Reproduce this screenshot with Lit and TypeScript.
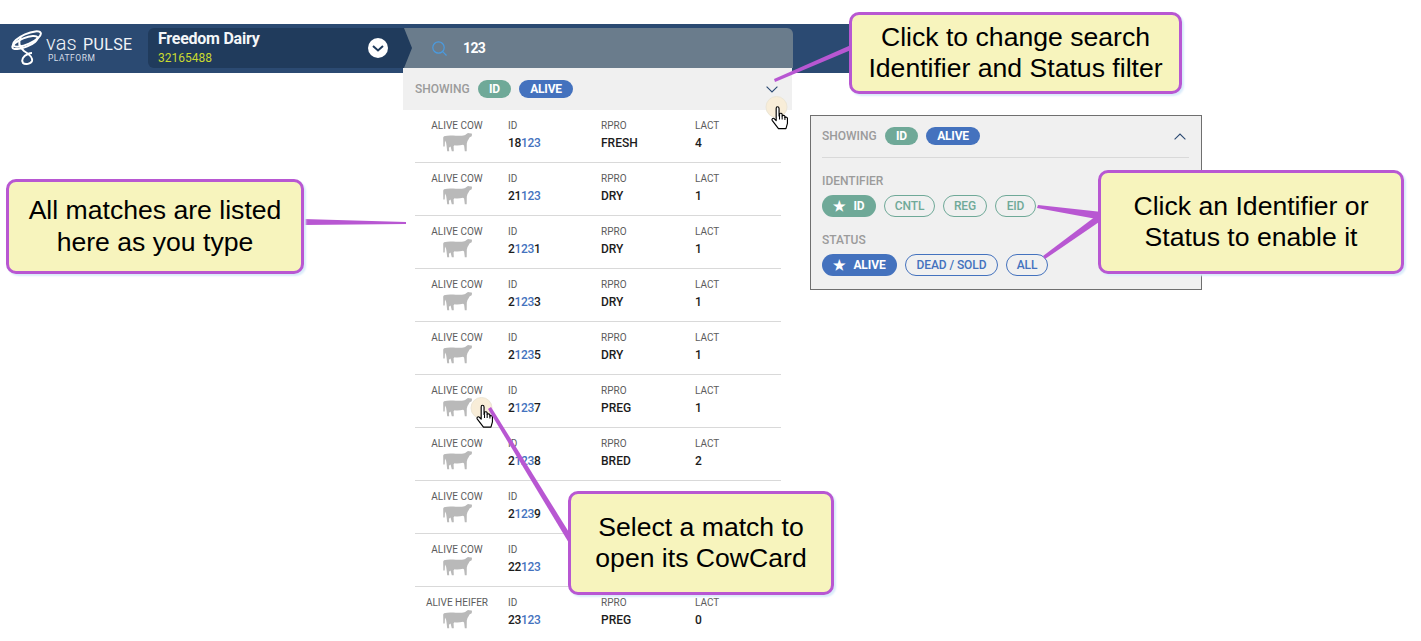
import { LitElement, html, css, svg } from "lit";
import { customElement } from "lit/decorators.js";

const rows = [
  ["ALIVE COW", "18", "123", "", "FRESH", "4"],
  ["ALIVE COW", "21", "123", "", "DRY", "1"],
  ["ALIVE COW", "2", "123", "1", "DRY", "1"],
  ["ALIVE COW", "2", "123", "3", "DRY", "1"],
  ["ALIVE COW", "2", "123", "5", "DRY", "1"],
  ["ALIVE COW", "2", "123", "7", "PREG", "1"],
  ["ALIVE COW", "2", "123", "8", "BRED", "2"],
  ["ALIVE COW", "2", "123", "9", "DRY", "1"],
  ["ALIVE COW", "22", "123", "", "DRY", "1"],
  ["ALIVE HEIFER", "23", "123", "", "PREG", "0"],
];

const cow = html`<svg class="cow" viewBox="0 0 30 20" width="30" height="20"><path fill="#b9b9b9" d="M2 4.200C6 3.300 10 3.600 14 3.800c3 .1 6 .2 8.500-.5 1.500-.6 2.500-1.700 3.500-2.200l1.200.2 2.500.1.300 1.100-.3 1.700-1.900 1c-.8 1-1.300 2.600-2.300 3.700l-.7 2.500-.1 7.800h-1.900l-.7-5.800-1.100-.7c-2.500.8-6 1-8.500.6l-.9 1 .2 4.900H9.800l-1.200-4.600-1.700 1.200.3 3.400H5.200l-.6-5.100-.5-3.400L3 8.400l-.3 6H1.300l-.1-9z"/></svg>`;

const hand = svg`<path fill="#fff" stroke="#000" stroke-width="1" stroke-linejoin="round" d="M5.500 1.500c1 0 1.500.7 1.500 1.500v6.500l.4-.1V7.500c.9-.6 2-.4 2.300.5v1.500c.9-.8 2-.6 2.400.3v1c1-.5 2-.1 2.200.8v4.400l-1.300 4.500H6.500L1 13.300c-.6-1 .7-2.300 1.700-1.500l1.800 1.700V3c0-.8.300-1.500 1-1.500z"/><path stroke="#000" fill="none" stroke-width=".9" d="M7.400 9.500v3M9.700 9.500v3M12.100 10.500v2.500"/>`;

@customElement("app-root")
export class AppRoot extends LitElement {
  static styles = css`
    :host {
      display: block;
      position: relative;
      width: 1421px;
      height: 641px;
      overflow: hidden;
      background: #fff;
      font-family: Roboto, "Liberation Sans", sans-serif;
    }
    .header {
      margin-top: 24px;
      width: 860px;
      height: 49px;
      background: #2b4a72;
      display: flex;
      align-items: flex-start;
      padding-top: 4px;
      box-sizing: border-box;
      position: absolute;
      top: 0;
      left: 0;
    }
    .logo {
      width: 148px;
      height: 40px;
      flex: none;
      display: flex;
      align-items: center;
      padding-left: 10px;
      box-sizing: border-box;
      gap: 4px;
      color: #fff;
    }
    .logo-text {
      display: flex;
      flex-direction: column;
      line-height: 1;
      margin-top: 2px;
    }
    .brand {
      font-size: 16px;
      line-height: 17px;
      white-space: nowrap;
      font-weight: 400;
      letter-spacing: 0.4px;
      color: #f1f4f8;
    }
    .brand b {
      font-weight: 300;
      font-size: 20px;
      margin-right: 6px;
      letter-spacing: 0.2px;
    }
    .platform {
      font-size: 8.500px;
      line-height: 9px;
      letter-spacing: 0.5px;
      margin-top: 1px;
      margin-left: 2px;
      color: #d5dde8;
    }
    .farm {
      width: 264px;
      height: 40px;
      flex: none;
      background: #203b5c;
      border-radius: 6px 0 0 6px;
      display: flex;
      align-items: center;
      justify-content: space-between;
      box-sizing: border-box;
      padding: 0 24px 0 10px;
      clip-path: polygon(0 0, 256px 0, 264px 20px, 256px 40px, 0 40px);
      position: relative;
      z-index: 3;
    }
    .farm-name {
      color: #f4f6f8;
      font-weight: 700;
      font-size: 16px;
      line-height: 20px;
      letter-spacing: -0.25px;
    }
    .farm-id {
      color: #c9d92f;
      font-size: 12px;
      line-height: 17px;
      margin-top: 1px;
    }
    .circle {
      width: 20px;
      height: 20px;
      border-radius: 50%;
      background: #fff;
      display: flex;
      align-items: center;
      justify-content: center;
    }
    .search {
      width: 390px;
      height: 40px;
      margin-left: -9px;
      background: #6a7c8c;
      border-radius: 0 6px 0 0;
      display: flex;
      align-items: center;
      gap: 16px;
      padding-left: 29px;
      box-sizing: border-box;
      color: #fff;
      font-weight: 700;
      font-size: 14px;
      letter-spacing: -0.6px;
    }
    .main {
      position: absolute;
      left: 403px;
      top: 68px;
      display: flex;
      align-items: flex-start;
      gap: 18px;
    }
    .results {
      width: 389px;
      flex: none;
    }
    .showing {
      height: 42px;
      background: #f0f0f0;
      display: flex;
      align-items: center;
      padding: 0 14px 0 12px;
      box-sizing: border-box;
    }
    .lbl {
      color: #9b9b9b;
      font-size: 12px;
      font-weight: 500;
      width: 55px;
    }
    .chip {
      height: 18px;
      border-radius: 9px;
      color: #fff;
      font-size: 12px;
      font-weight: 700;
      letter-spacing: -0.2px;
      display: flex;
      align-items: center;
      justify-content: center;
      box-sizing: border-box;
      margin-left: 8px;
    }
    .green { background: #6fa998; }
    .blue { background: #4472be; }
    .c-id { width: 33px; }
    .c-alive { width: 54px; }
    .chev { margin-left: auto; display: block; }
    .list {
      width: 366px;
      margin-left: 12px;
    }
    .row {
      height: 53px;
      box-sizing: border-box;
      border-bottom: 1px solid #d9d9d9;
      display: grid;
      grid-template-columns: 84px 84px 85px 1fr;
      column-gap: 9px;
      padding-top: 9px;
    }
    .row:last-child { border-bottom: none; }
    .label {
      font-size: 10px;
      line-height: 13px;
      color: #5c5c5c;
      white-space: nowrap;
    }
    .val {
      font-size: 12px;
      line-height: 16px;
      margin-top: 3px;
      color: #1c1c1c;
      font-weight: 500;
    }
    .val.num { letter-spacing: -0.3px; }
    .val span { color: #4472be; }
    .kind {
      display: flex;
      flex-direction: column;
      align-items: center;
    }
    .cow { margin-top: 0; display: block; }
    .filters {
      flex: none;
      margin-top: 47px;
      width: 392px;
      height: 175px;
      box-sizing: border-box;
      background: #f0f0f0;
      border: 1px solid #6f6f6f;
      padding: 10px 12px 0 11px;
    }
    .filter-top {
      display: flex;
      align-items: center;
      height: 20px;
      padding-bottom: 11px;
      border-bottom: 1px solid #d9d9d9;
      box-sizing: content-box;
    }
    .filter-top .chev { margin-right: 3px; }
    .sec {
      color: #9b9b9b;
      font-size: 12px;
      font-weight: 500;
      line-height: 16px;
    }
    .sec.first { margin-top: 15px; }
    .sec.second { margin-top: 15px; }
    .opts {
      display: flex;
      gap: 8px;
      margin-top: 6px;
    }
    .opt {
      height: 22px;
      border-radius: 11px;
      font-size: 12px;
      font-weight: 500;
      letter-spacing: -0.1px;
      display: flex;
      align-items: center;
      justify-content: center;
      gap: 7px;
      box-sizing: border-box;
      border: 1px solid transparent;
      white-space: nowrap;
    }
    .opt.on { color: #fff; font-weight: 700; }
    .star { font-size: 14px; line-height: 14px; }
    .opt.g { border-color: #6fa998; color: #6fa998; }
    .opt.b { border-color: #4472be; color: #4472be; }
    .lines {
      position: absolute;
      left: 0;
      top: 0;
      z-index: 5;
      pointer-events: none;
    }
    .callout {
      position: absolute;
      z-index: 6;
      box-sizing: border-box;
      background: #f7f4bd;
      border: 3px solid #b857d2;
      border-radius: 10px;
      box-shadow: 2px 2px 2px #d9ebfa;
      display: flex;
      align-items: center;
      justify-content: center;
      text-align: center;
      color: #000;
      font-family: "Liberation Sans", Arial, sans-serif;
      font-size: 26.600px;
      line-height: 31.500px;
    }
    .c1 { left: 849px; top: 12px; width: 333px; height: 82px; }
    .c2 { left: 6px; top: 179px; width: 298px; height: 95px; }
    .c3 { left: 1098px; top: 170px; width: 306px; height: 104px; }
    .c4 { left: 568px; top: 491px; width: 266px; height: 104px; }
    .pointer {
      position: absolute;
      z-index: 4;
      pointer-events: none;
    }
    .p1 { left: 765px; top: 95px; }
    .p2 { left: 470px; top: 396px; }
  `;

  private chevron(up: boolean) {
    return html`<svg class="chev" width="12" height="7" viewBox="0 0 12 7"><path fill="none" stroke="#2b4a72" stroke-width="1.100" d="${up ? "M.6 6.300 6 1l5.400 5.300" : "M.6.700 6 6l5.400-5.300"}"/></svg>`;
  }

  private pointer(cls: string, handY: number) {
    return html`<svg class="pointer ${cls}" width="26" height="36" viewBox="0 0 26 36">
      <circle cx="11.500" cy="12" r="10.500" fill="#f8edd8" stroke="#ece6d6"/>
      <g transform="translate(6 ${handY}) scale(1.150)">${hand}</g>
    </svg>`;
  }

  render() {
    return html`
      <div class="header">
        <div class="logo">
          <svg width="32" height="36" viewBox="0 0 32 36" fill="none" stroke="#fff" stroke-width="2">
            <ellipse cx="17" cy="9" rx="15" ry="5" transform="rotate(-24 17 9)"/>
            <ellipse cx="15" cy="12.500" rx="13.500" ry="4.500" transform="rotate(-22 15 12.500)"/>
            <path d="M11 7c-3 5-2 10 3 14 5 3 9 6 8 10-1 3-7 4-9 2-2-3 0-7 5-9 2-1 3-1 4-1"/>
          </svg>
          <div class="logo-text">
            <div class="brand"><b>vas</b>PULSE</div>
            <div class="platform">PLATFORM</div>
          </div>
        </div>
        <div class="farm">
          <div>
            <div class="farm-name">Freedom Dairy</div>
            <div class="farm-id">32165488</div>
          </div>
          <div class="circle">
            <svg width="12" height="7" viewBox="0 0 12 7"><path fill="none" stroke="#203b5c" stroke-width="2" d="M1 1l5 4.500L11 1"/></svg>
          </div>
        </div>
        <div class="search">
          <svg width="15" height="15" viewBox="0 0 15 15" fill="none" stroke="#4a9be0" stroke-width="1.200"><circle cx="6.500" cy="6.500" r="5.700"/><path d="M10.700 10.700 14.500 14.500"/></svg>
          <span>123</span>
        </div>
      </div>

      <div class="main">
        <div class="results">
          <div class="showing">
            <span class="lbl">SHOWING</span>
            <span class="chip green c-id">ID</span>
            <span class="chip blue c-alive">ALIVE</span>
            ${this.chevron(false)}
          </div>
          <div class="list">
            ${rows.map(
              (r) => html`<div class="row">
                <div class="kind"><div class="label">${r[0]}</div>${cow}</div>
                <div><div class="label">ID</div><div class="val num">${r[1]}<span>${r[2]}</span>${r[3]}</div></div>
                <div><div class="label">RPRO</div><div class="val">${r[4]}</div></div>
                <div><div class="label">LACT</div><div class="val">${r[5]}</div></div>
              </div>`
            )}
          </div>
        </div>

        <div class="filters">
          <div class="filter-top">
            <span class="lbl">SHOWING</span>
            <span class="chip green c-id">ID</span>
            <span class="chip blue c-alive">ALIVE</span>
            ${this.chevron(true)}
          </div>
          <div class="sec first">IDENTIFIER</div>
          <div class="opts">
            <div class="opt on green" style="width:54px"><span class="star">★</span>ID</div>
            <div class="opt g" style="width:51px">CNTL</div>
            <div class="opt g" style="width:44px">REG</div>
            <div class="opt g" style="width:41px">EID</div>
          </div>
          <div class="sec second">STATUS</div>
          <div class="opts">
            <div class="opt on blue" style="width:75px"><span class="star">★</span>ALIVE</div>
            <div class="opt b" style="width:93px">DEAD / SOLD</div>
            <div class="opt b" style="width:42px">ALL</div>
          </div>
        </div>
      </div>

      ${this.pointer("p1", 10)} ${this.pointer("p2", 7.5)}

      <svg class="lines" width="1421" height="641" fill="#b857d2">
        <path d="M774 79 851 45v5L775 82z"/>
        <path d="M303 219 406 222v2L303 225z"/>
        <path d="M1038 205 1102 212v8L1037 208z"/>
        <path d="M1043 256 1100 213l2 7-57 39z"/>
        <path d="M491 407l89 143-5 3-87-144z"/>
      </svg>

      <div class="callout c1"><div>Click to change search<br />Identifier and Status filter</div></div>
      <div class="callout c2"><div>All matches are listed<br />here as you type</div></div>
      <div class="callout c3"><div>Click an Identifier or<br />Status to enable it</div></div>
      <div class="callout c4"><div>Select a match to<br />open its CowCard</div></div>
    `;
  }
}
